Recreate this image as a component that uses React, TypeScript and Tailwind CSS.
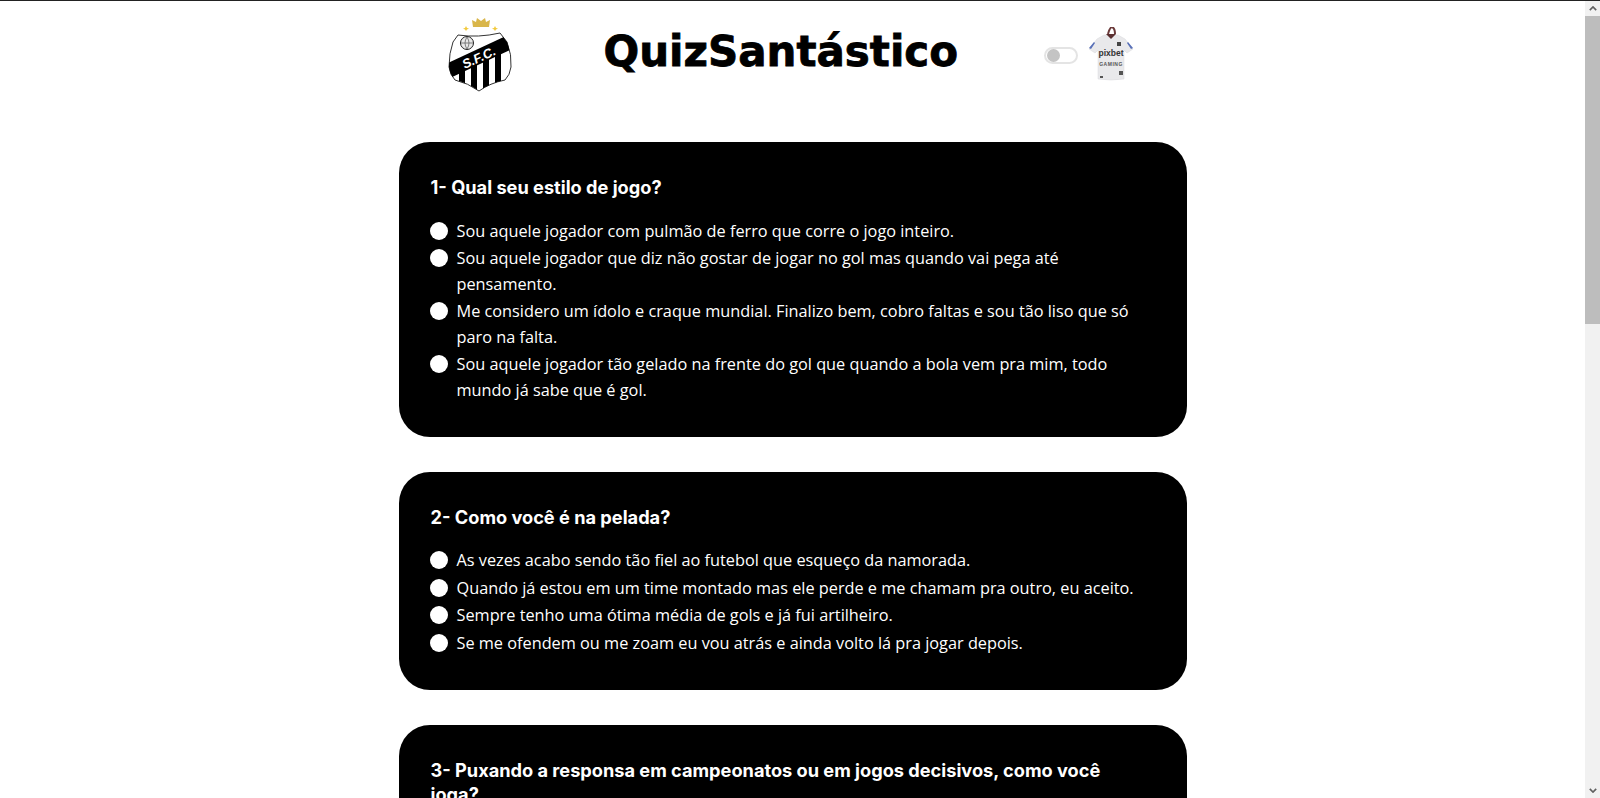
const questions = [
  {
    title: "1- Qual seu estilo de jogo?",
    options: [
      "Sou aquele jogador com pulmão de ferro que corre o jogo inteiro.",
      "Sou aquele jogador que diz não gostar de jogar no gol mas quando vai pega até pensamento.",
      "Me considero um ídolo e craque mundial. Finalizo bem, cobro faltas e sou tão liso que só paro na falta.",
      "Sou aquele jogador tão gelado na frente do gol que quando a bola vem pra mim, todo mundo já sabe que é gol.",
    ],
  },
  {
    title: "2- Como você é na pelada?",
    options: [
      "As vezes acabo sendo tão fiel ao futebol que esqueço da namorada.",
      "Quando já estou em um time montado mas ele perde e me chamam pra outro, eu aceito.",
      "Sempre tenho uma ótima média de gols e já fui artilheiro.",
      "Se me ofendem ou me zoam eu vou atrás e ainda volto lá pra jogar depois.",
    ],
  },
  {
    title: "3- Puxando a responsa em campeonatos ou em jogos decisivos, como você joga?",
    options: ["Sou decisivo nos momentos mais importantes."],
  },
];

const shieldPath = "M10 18 Q30 21 52 16 L59 25 Q64 38 63 50 Q62 58 57 63 Q42 66 31 74 Q20 66 7 63 Q2 58 1 50 Q1 36 5 25 Z";

const Crest = () => (
  <svg viewBox="0 0 64 76" className="h-[76px] w-16">
    <path d="M25 10 L24 3 L28 5 L29 1 L33 4 L37 1 L38 5 L42 3 L41 10 Z" fill="#d9b64a" />
    <path d="M18 9 L19 11 L21 11.500 L19 12.500 L18 14 L17 12.500 L15 11.500 L17 11 Z" fill="#f2c93b" />
    <path d="M47 9 L48 11 L50 11.500 L48 12.500 L47 14 L46 12.500 L44 11.500 L46 11 Z" fill="#f2c93b" />
    <clipPath id="shield">
      <path d={shieldPath} />
    </clipPath>
    <path d={shieldPath} fill="#fff" stroke="#333" strokeWidth="1" />
    <g clipPath="url(#shield)">
      <path d="M11 46 H17 V72 H11 Z M23 40 H29 V76 H23 Z M35 34 H41 V76 H35 Z M47 28 H53 V72 H47 Z" fill="#000" />
      <path d="M0 46 L60 18 L64 32 L0 62 Z" fill="#000" />
    </g>
    <circle cx="19" cy="26" r="6.500" fill="#e8e8e8" stroke="#222" />
    <path d="M13 26 H25 M19 20 Q15 26 19 32 M19 20 Q23 26 19 32" fill="none" stroke="#666" strokeWidth="0.8" />
    <text x="31" y="45" textAnchor="middle" transform="rotate(-25 31 41)" fill="#fff" fontSize="13" fontWeight="700" fontStyle="italic" fontFamily="Liberation Sans, sans-serif">S.F.C.</text>
  </svg>
);

const Shirt = () => (
  <svg viewBox="0 0 46 58" className="h-[58px] w-[46px]">
    <path d="M20 7 Q22 0 24 0 Q27 1 27 7" fill="none" stroke="#6b3a3a" strokeWidth="2" />
    <path d="M16 8 L30 8 L37 12 L45 22 L39 26 L36 23 L36 52 Q23 54 10 52 L10 23 L7 26 L1 22 L9 12 Z" fill="#e9e9eb" stroke="#d8d8dc" strokeWidth="0.5" />
    <path d="M18 7 L28 7 L23 12 Z" fill="#5a2f30" />
    <path d="M1 21 L6 15 L7 16 L3 22 Z M45 21 L40 15 L39 16 L43 22 Z" fill="#5870b8" />
    <text x="23" y="29" textAnchor="middle" fill="#333" fontSize="8.500" fontWeight="700" fontFamily="Liberation Sans, sans-serif">pixbet</text>
    <text x="23" y="38.500" textAnchor="middle" fill="#555" fontSize="5" fontWeight="700" letterSpacing="0.5" fontFamily="Liberation Sans, sans-serif">GAMING</text>
    <rect x="29" y="15" width="4" height="4" fill="#444" />
    <rect x="31" y="44" width="4" height="4" fill="#555" />
    <rect x="12" y="49" width="3" height="2" fill="#555" />
  </svg>
);

const Question = ({ title, options }: { title: string; options: string[] }) => (
  <section className="rounded-[31px] bg-black pt-[33px] pr-[50px] pb-[33px] pl-[31px] text-white">
    <h2 className="mb-[19.5px] ml-[1px] text-[18.2px] leading-[24px] font-bold font-['Inter','Liberation_Sans',sans-serif]">{title}</h2>
    <ul className="flex flex-col gap-[2px]">
      {options.map((option) => (
        <li key={option} className="flex gap-[9px] text-[16.3px] leading-[25.6px] font-['Open_Sans','Noto_Sans',sans-serif]">
          <span className="mt-[3px] h-[18px] w-[18px] shrink-0 rounded-full bg-white" />
          <span>{option}</span>
        </li>
      ))}
    </ul>
  </section>
);

export default function App() {
  return (
    <div className="flex h-[798px] overflow-hidden border-t border-[#222] bg-white">
      <main className="w-[1585px] shrink-0">
        <header className="mx-auto flex h-[141px] w-[788px] items-start">
          <div className="mt-[16px] ml-[49px]"><Crest /></div>
          <h1 className="mt-[21px] ml-[92px] w-[354px] whitespace-nowrap text-[42px] leading-[60px] font-bold text-black [-webkit-text-stroke:0.8px_black] font-['DejaVu_Sans',sans-serif]">
            QuizSantástico
          </h1>
          <div className="mt-[46px] ml-[86px] flex h-[17px] w-[34px] items-center rounded-full border-2 border-[#e4e4e4] bg-white pl-[1px]">
            <div className="h-[13px] w-[13px] shrink-0 rounded-full bg-[#c4c4c4]" />
          </div>
          <div className="mt-[26px] ml-[10px]"><Shirt /></div>
        </header>
        <div className="mx-auto flex w-[788px] flex-col gap-[35px]">
          {questions.map((q) => (
            <Question key={q.title} title={q.title} options={q.options} />
          ))}
        </div>
      </main>
      <aside className="flex h-full w-[15px] shrink-0 flex-col bg-[#f1f1f1]">
        <div className="flex h-[15px] shrink-0 items-center justify-center">
          <svg viewBox="0 0 10 6" className="h-[5px] w-[8px]"><path d="M1 5 L5 1 L9 5" fill="none" stroke="#606060" strokeWidth="2" /></svg>
        </div>
        <div className="h-[308px] shrink-0 bg-[#bdbdbd]" />
        <div className="flex-1" />
        <div className="flex h-[15px] shrink-0 items-center justify-center">
          <svg viewBox="0 0 10 6" className="h-[5px] w-[8px]"><path d="M1 1 L5 5 L9 1" fill="none" stroke="#606060" strokeWidth="2" /></svg>
        </div>
      </aside>
    </div>
  );
}
